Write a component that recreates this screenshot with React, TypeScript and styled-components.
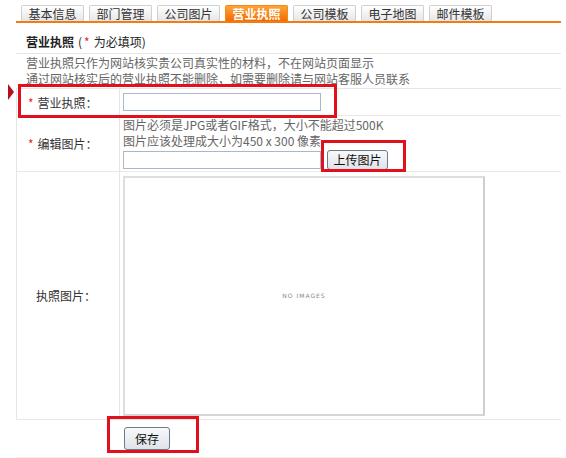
import styled, { createGlobalStyle } from "styled-components";

const GlobalStyle = createGlobalStyle`
  body {
    margin: 0;
    background: #fff;
    font-family: "Noto Sans CJK SC", "Liberation Sans", sans-serif;
    font-size: 12px;
    color: #333;
  }
`;

const Page = styled.div`
  position: relative;
  width: 545px;
  height: 458px;
  margin-left: 16px;
`;

const TabBar = styled.div`
  display: flex;
  gap: 5px;
  padding: 5px 0 0 5px;
  height: 16px;
  border-bottom: 2px solid #f47a12;
`;

const Tab = styled.div<{ $active?: boolean }>`
  width: 61px;
  height: 15px;
  border: 1px solid ${p => (p.$active ? "#f08a20" : "#d0d0d0")};
  border-bottom: none;
  border-radius: 2px 2px 0 0;
  background: ${p =>
    p.$active
      ? "linear-gradient(#ffa437, #f56b00)"
      : "linear-gradient(#ffffff, #e6e6e6)"};
  color: ${p => (p.$active ? "#fff" : "#333")};
  font-weight: ${p => (p.$active ? "bold" : "normal")};
  font-size: 12px;
  line-height: 16px;
  text-align: center;
`;

const Title = styled.div`
  height: 30px;
  line-height: 38px;
  padding-left: 10px;
  border-bottom: 1px solid #e6e6e6;
  font-size: 12px;
  font-weight: bold;
  color: #222;
`;

const TitleNote = styled.span`
  font-weight: normal;
  margin-left: 4px;
`;

const Star = styled.span`
  color: #e22;
  margin: 0 4px 0 2px;
`;

const Desc = styled.div`
  height: 34px;
  overflow: hidden;
  padding: 1px 0 0 10px;
  box-sizing: border-box;
  line-height: 16px;
  color: #666;
  font-size: 12px;
`;

const Table = styled.div`
  border-top: 1px solid #e6e6e6;
  border-left: 1px solid #e6e6e6;
`;

const Row = styled.div<{ $h: number }>`
  display: flex;
  height: ${p => p.$h}px;
  border-bottom: 1px solid #e8e8e8;
`;

const LabelCell = styled.div<{ $indent?: number }>`
  width: 103px;
  border-right: 1px solid #e6e6e6;
  display: flex;
  align-items: center;
  padding-left: ${p => 9 + (p.$indent ?? 0)}px;
  box-sizing: border-box;
  color: #333;
  white-space: nowrap;
`;

const FieldCell = styled.div`
  flex: 1;
  padding-left: 3px;
  display: flex;
  flex-direction: column;
  justify-content: center;
`;

const Hint = styled.div`
  line-height: 16px;
  color: #666;
  font-size: 12px;
`;

const TextInput = styled.div<{ $w: number }>`
  width: ${p => p.$w}px;
  height: 16px;
  border: 1px solid #a9b8c6;
  background: #fff;
`;

const InputRow = styled.div`
  display: flex;
  align-items: center;
  gap: 6px;
  margin-top: 1px;
`;

const Button = styled.div<{ $w: number; $h: number }>`
  width: ${p => p.$w}px;
  height: ${p => p.$h}px;
  border: 1px solid #6b7c8c;
  border-radius: 3px;
  background: linear-gradient(#f8f9fa, #dfe3e8);
  color: #111;
  font-size: 12px;
  line-height: ${p => p.$h}px;
  text-align: center;
`;

const ImageBox = styled.div`
  width: 358px;
  height: 236px;
  border: 2px solid #dedede;
  border-right-color: #cfcfcf;
  border-bottom-color: #d6d6d6;
  display: flex;
  align-items: center;
  justify-content: center;
`;

const NoImages = styled.span`
  font-family: "DejaVu Sans", sans-serif;
  font-size: 6px;
  letter-spacing: 1px;
  color: #888;
`;

const SaveBar = styled.div`
  height: 37px;
  padding-left: 108px;
  display: flex;
  align-items: center;
  border-bottom: 1px solid #f6f1dd;
`;

const Highlight = styled.div<{ $x: number; $y: number; $w: number; $h: number }>`
  position: absolute;
  left: ${p => p.$x}px;
  top: ${p => p.$y}px;
  width: ${p => p.$w}px;
  height: ${p => p.$h}px;
  border: 3px solid #e0101c;
  box-sizing: border-box;
  pointer-events: none;
`;

const Pointer = styled.div`
  position: absolute;
  left: -8px;
  top: 84px;
  width: 0;
  height: 0;
  border-top: 8px solid transparent;
  border-bottom: 8px solid transparent;
  border-left: 6px solid #b8101a;
`;

const tabs = ["基本信息", "部门管理", "公司图片", "营业执照", "公司模板", "电子地图", "邮件模板"];

export default function App() {
  return (
    <>
      <GlobalStyle />
      <Page>
        <TabBar>
          {tabs.map(t => (
            <Tab key={t} $active={t === "营业执照"}>
              {t}
            </Tab>
          ))}
        </TabBar>
        <Title>
          营业执照
          <TitleNote>
            (<Star>*</Star>为必填项)
          </TitleNote>
        </Title>
        <Desc>
          营业执照只作为网站核实贵公司真实性的材料，不在网站页面显示
          <br />
          通过网站核实后的营业执照不能删除，如需要删除请与网站客服人员联系
        </Desc>
        <Table>
          <Row $h={26}>
            <LabelCell>
              <Star>*</Star>营业执照：
            </LabelCell>
            <FieldCell>
              <TextInput $w={196} />
            </FieldCell>
          </Row>
          <Row $h={55}>
            <LabelCell>
              <Star>*</Star>编辑图片：
            </LabelCell>
            <FieldCell>
              <Hint>图片必须是JPG或者GIF格式，大小不能超过500K</Hint>
              <Hint>图片应该处理成大小为450 x 300 像素</Hint>
              <InputRow>
                <TextInput $w={196} />
                <Button $w={59} $h={18}>上传图片</Button>
              </InputRow>
            </FieldCell>
          </Row>
          <Row $h={247}>
            <LabelCell $indent={10}>执照图片：</LabelCell>
            <FieldCell>
              <ImageBox>
                <NoImages>NO IMAGES</NoImages>
              </ImageBox>
            </FieldCell>
          </Row>
        </Table>
        <SaveBar>
          <Button $w={44} $h={21}>保存</Button>
        </SaveBar>
        <Pointer />
        <Highlight $x={2} $y={84} $w={319} $h={34} />
        <Highlight $x={305} $y={140} $w={85} $h={32} />
        <Highlight $x={91} $y={416} $w={92} $h={37} />
      </Page>
    </>
  );
}
